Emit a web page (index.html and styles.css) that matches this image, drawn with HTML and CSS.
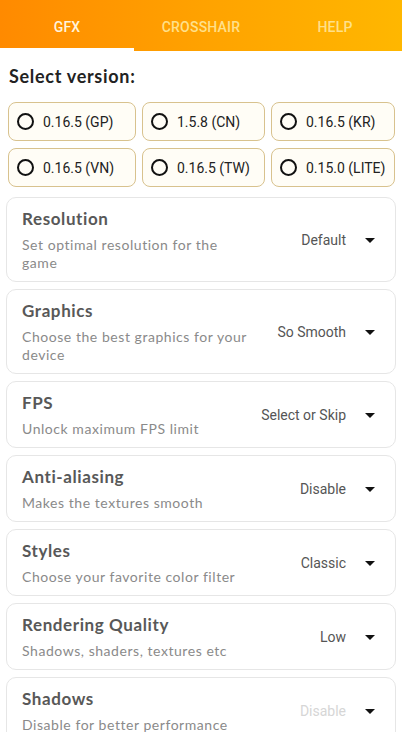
FILE: index.html
```html
<!DOCTYPE html>
<html lang="en">
<head>
    <meta charset="UTF-8">
    <meta name="viewport" content="width=device-width, initial-scale=1.0">
    <title>GFX Tool</title>
    <link rel="stylesheet" href="styles.css">
</head>
<body>
    <header class="tabs">
        <div class="tab active">GFX</div>
        <div class="tab">CROSSHAIR</div>
        <div class="tab">HELP</div>
    </header>

    <main class="content">
        <h2 class="section-title">Select version:</h2>

        <div class="versions">
            <label class="version"><span class="radio"></span>0.16.5 (GP)</label>
            <label class="version"><span class="radio"></span>1.5.8 (CN)</label>
            <label class="version"><span class="radio"></span>0.16.5 (KR)</label>
            <label class="version"><span class="radio"></span>0.16.5 (VN)</label>
            <label class="version"><span class="radio"></span>0.16.5 (TW)</label>
            <label class="version"><span class="radio"></span>0.15.0 (LITE)</label>
        </div>

        <div class="option">
            <div class="option-text">
                <h3>Resolution</h3>
                <p>Set optimal resolution for the game</p>
            </div>
            <div class="option-select"><span>Default</span><i class="arrow"></i></div>
        </div>

        <div class="option">
            <div class="option-text">
                <h3>Graphics</h3>
                <p>Choose the best graphics for your device</p>
            </div>
            <div class="option-select"><span>So Smooth</span><i class="arrow"></i></div>
        </div>

        <div class="option">
            <div class="option-text">
                <h3>FPS</h3>
                <p>Unlock maximum FPS limit</p>
            </div>
            <div class="option-select"><span>Select or Skip</span><i class="arrow"></i></div>
        </div>

        <div class="option">
            <div class="option-text">
                <h3>Anti-aliasing</h3>
                <p>Makes the textures smooth</p>
            </div>
            <div class="option-select"><span>Disable</span><i class="arrow"></i></div>
        </div>

        <div class="option">
            <div class="option-text">
                <h3>Styles</h3>
                <p>Choose your favorite color filter</p>
            </div>
            <div class="option-select"><span>Classic</span><i class="arrow"></i></div>
        </div>

        <div class="option">
            <div class="option-text">
                <h3>Rendering Quality</h3>
                <p>Shadows, shaders, textures etc</p>
            </div>
            <div class="option-select"><span>Low</span><i class="arrow"></i></div>
        </div>

        <div class="option">
            <div class="option-text">
                <h3>Shadows</h3>
                <p>Disable for better performance</p>
            </div>
            <div class="option-select disabled"><span>Disable</span><i class="arrow"></i></div>
        </div>
    </main>
</body>
</html>
```

FILE: styles.css
```css
/* General */
* {
    margin: 0;
    padding: 0;
    box-sizing: border-box;
}

body {
    background-color: #fff;
    color: #333;
    font-family: 'Roboto', sans-serif;
    overflow: hidden;
}

/* Tabs */
.tabs {
    display: flex;
    height: 51px;
    background: linear-gradient(90deg, #ff8a00 0%, #ffa200 50%, #ffb700 100%);
}

.tab {
    flex: 1;
    display: flex;
    align-items: center;
    justify-content: center;
    padding-top: 6px;
    font-size: 14px;
    font-weight: 500;
    color: #ffe08a;
    letter-spacing: 0.2px;
    border-bottom: 3px solid transparent;
}

.tab.active {
    color: #fff4dc;
    border-bottom-color: #fff;
}

/* Content */
.content {
    padding: 0 6px;
}

.section-title {
    font-family: 'Lato', sans-serif;
    font-size: 18px;
    font-weight: 700;
    color: #222;
    margin: 14px 0 15px 3px;
    letter-spacing: 0.7px;
}

/* Versions */
.versions {
    display: grid;
    grid-template-columns: 128px 123px 124px;
    gap: 7px 6px;
    padding-left: 2px;
    margin-bottom: 10px;
}

.version {
    display: flex;
    align-items: center;
    height: 39px;
    padding-left: 8px;
    border: 1.5px solid #d8c28e;
    border-radius: 8px;
    background-color: #fffdf6;
    font-size: 14px;
    color: #222;
}

.radio {
    width: 17px;
    height: 17px;
    border: 2px solid #111;
    border-radius: 50%;
    margin-right: 9px;
    flex-shrink: 0;
}

/* Option cards */
.option {
    display: flex;
    align-items: center;
    border: 1.5px solid #e6e6e6;
    border-radius: 10px;
    padding: 10px 20px 9px 15px;
    margin-bottom: 7px;
}

.option-text {
    flex: 1;
    max-width: 230px;
    font-family: 'Lato', sans-serif;
}

.option-text h3 {
    font-size: 17px;
    font-weight: 700;
    color: #585858;
    line-height: 22px;
    margin-bottom: 6px;
    letter-spacing: 0.6px;
}

.option-text p {
    font-size: 14px;
    color: #8a8a8a;
    line-height: 18px;
    letter-spacing: 0.55px;
}

.option-select {
    margin-left: auto;
    display: flex;
    align-items: center;
    font-size: 14px;
    color: #555;
}

.option-select.disabled span {
    color: #d6d6d6;
}

.arrow {
    width: 0;
    height: 0;
    margin-left: 19px;
    border-left: 5px solid transparent;
    border-right: 5px solid transparent;
    border-top: 5px solid #111;
}
```
